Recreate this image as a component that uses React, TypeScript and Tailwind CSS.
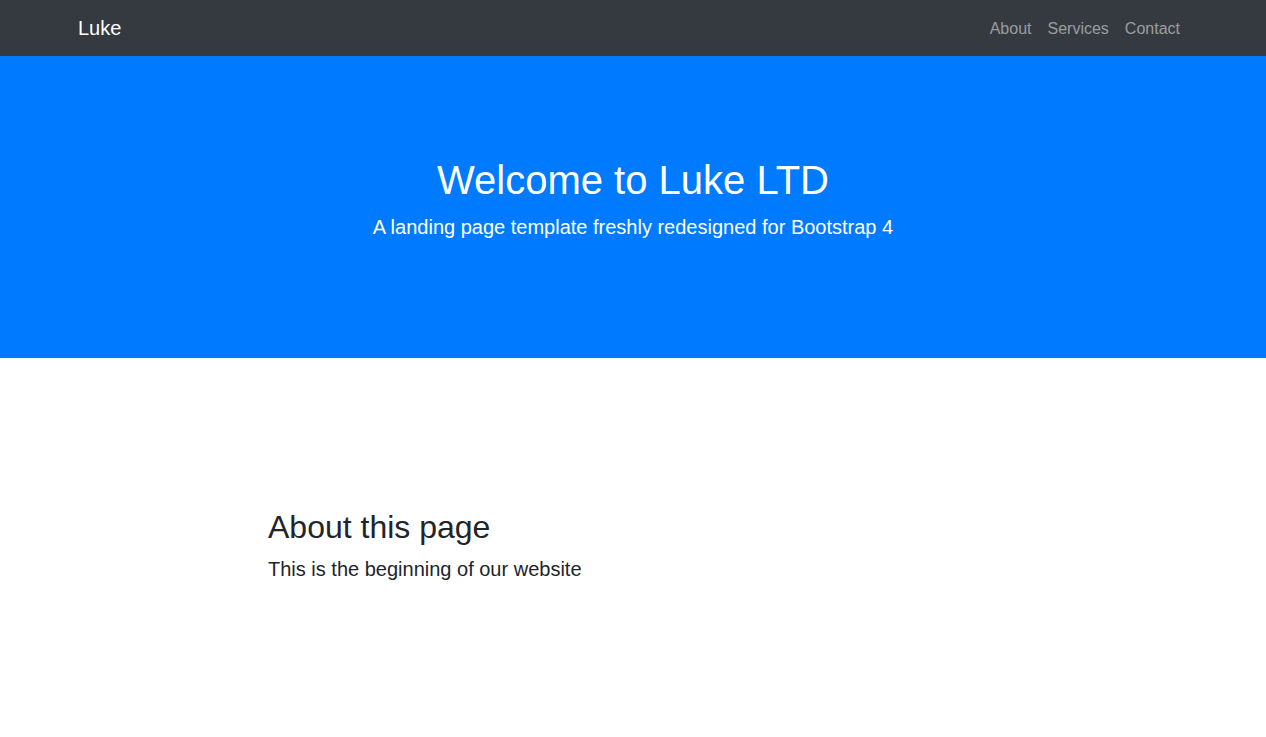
export default function App() {
  return (
    <div className="min-h-[737px] bg-white text-[#212529]" style={{ fontFamily: '"Liberation Sans", Arial, sans-serif' }}>
      <nav className="bg-[#343a40] h-[56px] flex items-center">
        <div className="w-[1140px] mx-auto px-[15px] flex items-center justify-between">
          <a className="text-white text-[20px] leading-[30px] py-[5px]">Luke</a>
          <ul className="flex pt-[2px]">
            <li><a className="block px-2 py-2 text-[16px] leading-6 text-white/50">About</a></li>
            <li><a className="block px-2 py-2 text-[16px] leading-6 text-white/50">Services</a></li>
            <li><a className="block px-2 py-2 text-[16px] leading-6 text-white/50">Contact</a></li>
          </ul>
        </div>
      </nav>
      <header className="bg-[#007bff] text-white h-[302px] pt-[100px] text-center">
        <h1 className="text-[40px] leading-[48px] font-normal mb-2">Welcome to Luke LTD</h1>
        <p className="text-[20px] leading-[30px] font-normal">A landing page template freshly redesigned for Bootstrap 4</p>
      </header>
      <section className="pt-[150px]">
        <div className="w-[1140px] mx-auto px-[15px]">
          <div className="w-[760px] mx-auto px-[15px]">
            <h2 className="text-[32px] leading-[38px] font-normal mb-2">About this page</h2>
            <p className="text-[20px] leading-[30px]">This is the beginning of our website</p>
          </div>
        </div>
      </section>
    </div>
  );
}
